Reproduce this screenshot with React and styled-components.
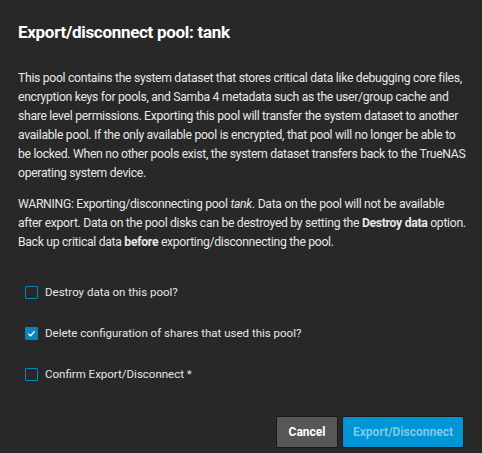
import React, { useState } from "react";
import styled, { createGlobalStyle } from "styled-components";

const GlobalStyle = createGlobalStyle`
  html, body {
    margin: 0;
    padding: 0;
    background: #282828;
  }
  * {
    box-sizing: border-box;
  }
`;

function Checkbox({ checked, label, onToggle }) {
  return (
    <CheckRow onClick={onToggle}>
      <Box checked={checked}>
        {checked ? (
          <svg width="9" height="9" viewBox="0 0 10 10">
            <path d="M1.5 5.2 L4 7.5 L8.5 2.5" fill="none" stroke="#fff" strokeWidth="1.4" />
          </svg>
        ) : null}
      </Box>
      <CheckLabel>{label}</CheckLabel>
    </CheckRow>
  );
}

function App() {
  const [destroy, setDestroy] = useState(false);
  const [deleteShares, setDeleteShares] = useState(true);
  const [confirm, setConfirm] = useState(false);
  return (
    <Dialog>
      <GlobalStyle />
      <Title>Export/disconnect pool: tank</Title>
      <Content>
        <Paragraph>
          This pool contains the system dataset that stores critical data like
          debugging core files, encryption keys for pools, and Samba 4 metadata
          such as the user/group cache and share level permissions. Exporting
          this pool will transfer the system dataset to another available pool.
          If the only available pool is encrypted, that pool will no longer be
          able to be locked. When no other pools exist, the system dataset
          transfers back to the TrueNAS operating system device.
        </Paragraph>
        <Paragraph>
          WARNING: Exporting/disconnecting pool <em>tank</em>. Data on the pool
          will not be available after export. Data on the pool disks can be
          destroyed by setting the <b>Destroy data</b> option. Back up critical
          data <b>before</b> exporting/disconnecting the pool.
        </Paragraph>
      </Content>
      <Options>
        <Checkbox
          checked={destroy}
          label="Destroy data on this pool?"
          onToggle={() => setDestroy(!destroy)}
        />
        <Checkbox
          checked={deleteShares}
          label="Delete configuration of shares that used this pool?"
          onToggle={() => setDeleteShares(!deleteShares)}
        />
        <Checkbox
          checked={confirm}
          label="Confirm Export/Disconnect *"
          onToggle={() => setConfirm(!confirm)}
        />
      </Options>
      <Actions>
        <Button bg="#575757" color="#ffffff">Cancel</Button>
        <Button bg="#0095d5" color="#7fc8ec" wide>
          Export/Disconnect
        </Button>
      </Actions>
    </Dialog>
  );
}

export default App;

const Dialog = styled.div`
  width: 482px;
  height: 453px;
  background: #282828;
  padding: 22px 18px 0 18px;
  display: flex;
  flex-direction: column;
  font-family: Roboto, "Liberation Sans", sans-serif;
  color: #e8e8e8;
`;
const Title = styled.h2`
  margin: 0;
  font-size: 17px;
  font-weight: 700;
  line-height: 20px;
  letter-spacing: -0.3px;
  color: #ffffff;
`;
const Content = styled.div`
  margin-top: 27px;
  margin-right: -4px;
  display: flex;
  flex-direction: column;
  gap: 12px;
`;
const Paragraph = styled.p`
  margin: 0;
  font-family: Roboto, "Liberation Sans", sans-serif;
  font-size: 12.2px;
  letter-spacing: -0.3px;
  line-height: 19px;
  color: #e6e6e6;
  b {
    font-weight: 700;
  }
`;
const Options = styled.div`
  margin-top: 32px;
  padding-left: 7px;
  display: flex;
  flex-direction: column;
  gap: 25px;
`;
const CheckRow = styled.div`
  display: flex;
  align-items: center;
  gap: 7px;
  height: 16px;
  cursor: pointer;
`;
const Box = styled.div`
  width: 13px;
  height: 13px;
  border: 1.5px solid #0b83bd;
  border-radius: 1px;
  background: ${(props) => (props.checked ? "#0b83bd" : "transparent")};
  display: flex;
  align-items: center;
  justify-content: center;
`;
const CheckLabel = styled.span`
  font-size: 11.5px;
  color: #e6e6e6;
`;
const Actions = styled.div`
  margin-top: auto;
  margin-bottom: 6px;
  display: flex;
  justify-content: flex-end;
  gap: 6px;
  padding-right: 1px;
`;
const Button = styled.button`
  height: 30px;
  width: ${(props) => (props.wide ? "120px" : "60px")};
  border: none;
  border-radius: 1px;
  background: ${(props) => props.bg};
  color: ${(props) => props.color};
  font-family: Roboto, "Liberation Sans", sans-serif;
  font-size: 12px;
  font-weight: 700;
  cursor: pointer;
  box-shadow: 0 0 0 1px #1a1a1a;
`;
